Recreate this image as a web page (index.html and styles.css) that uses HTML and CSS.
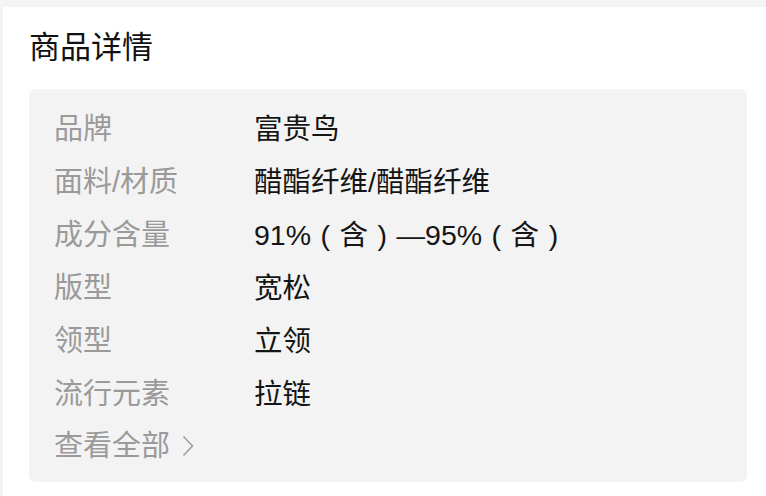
FILE: index.html
```html
<!DOCTYPE html>
<html lang="zh">
<head>
<meta charset="utf-8">
<link rel="stylesheet" href="styles.css">
</head>
<body>
<div class="card">
  <h2 class="title">商品详情</h2>
  <div class="box">
    <div class="row"><span class="label">品牌</span><span class="value">富贵鸟</span></div>
    <div class="row"><span class="label">面料/材质</span><span class="value">醋酯纤维/醋酯纤维</span></div>
    <div class="row"><span class="label">成分含量</span><span class="value">91%<span class="p">(</span>含<span class="p">)</span>—95%<span class="p">(</span>含<span class="p">)</span></span></div>
    <div class="row"><span class="label">版型</span><span class="value">宽松</span></div>
    <div class="row"><span class="label">领型</span><span class="value">立领</span></div>
    <div class="row"><span class="label">流行元素</span><span class="value">拉链</span></div>
    <div class="more">查看全部<svg class="chev" width="12" height="22" viewBox="0 0 12 22"><path d="M1.5 1.5 L10.5 11 L1.5 20.5" fill="none" stroke="#a0a0a0" stroke-width="1.6"/></svg></div>
  </div>
</div>
</body>
</html>
```

FILE: styles.css
```css
html, body {
  margin: 0;
  padding: 0;
  background: #f4f4f4;
  font-family: "Liberation Sans", "Noto Sans CJK SC", sans-serif;
}
.card {
  margin: 7px 0 0 3px;
  background: #fff;
  padding: 0 19px 14px 26px;
  height: 489px;
  box-sizing: border-box;
}
.title {
  margin: 0;
  font-weight: normal;
  font-size: 31px;
  color: #111;
  line-height: 82px;
  height: 82px;
}
.box {
  background: #f3f3f3;
  border-radius: 7px;
  padding: 14px 25px 12px 25px;
  height: 393px;
  box-sizing: border-box;
}
.row {
  display: flex;
  line-height: 53px;
  height: 53px;
}
.label {
  width: 200px;
  font-size: 29px;
  color: #9a9a9a;
}
.value {
  font-size: 28.5px;
  color: #151515;
}
.p {
  display: inline-block;
  width: 1em;
  text-align: center;
}
.more {
  display: flex;
  align-items: center;
  gap: 12px;
  font-size: 29px;
  line-height: 50px;
  color: #9a9a9a;
}
.chev {
  display: block;
}
```
